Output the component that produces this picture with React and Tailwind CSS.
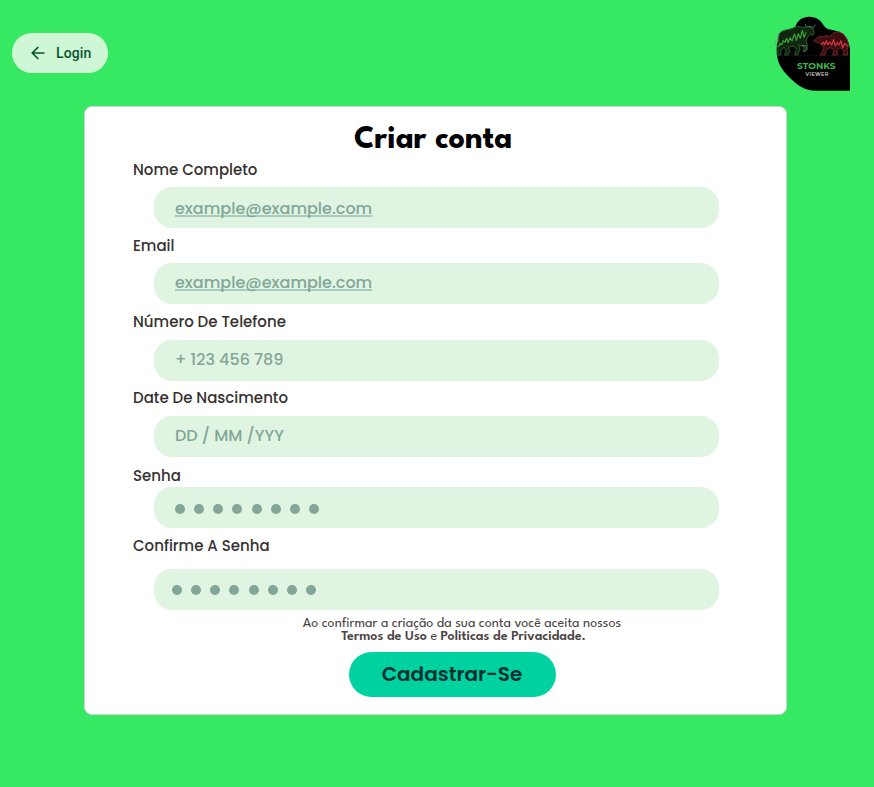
function Logo() {
  return (
    <svg className="h-[95px] w-[100px]" viewBox="0 0 300 285" role="img" aria-label="Stonks Viewer">
      <path d="M258 254H154C124 254 102 240 78 216C52 190 36 166 38 128C38 94 58 74 94 62C100 42 116 32 136 32C158 32 172 44 181 61C190 74 206 69 224 78C246 90 258 108 258 134Z" fill="#000" />
      <path d="M42 149H253" stroke="#0c1a10" strokeWidth="2" />
      <g fill="none" strokeLinejoin="round" strokeLinecap="round">
        <path d="M40 120C29 112 32 104 39 106C47 108 34 94 46 83" stroke="#6d9a70" strokeWidth="2.5" />
        <path d="M46 83C56 70 70 72 84 68L103 61L120 65L130 62L146 67L151 79L147 88L137 85L130 94L126 106L131 120L124 135L117 137L121 124L111 119L103 116L108 130L101 147H92L97 130L88 120L73 124L78 136L71 147H62L67 134L60 123L51 134L50 147H39L42 130L46 116L43 101Z" fill="#10260f" stroke="#2f6b33" strokeWidth="2.5" />
        <path d="M128 63L124 55M134 61L148 64L153 57M113 119L125 119L130 130L121 137" stroke="#5d8f5f" strokeWidth="2.5" />
        <path d="M42 121L49 113L53 116L58 104L63 109L68 97L72 110L78 95L84 105L91 84L97 103L103 83L109 97L115 73L120 94L126 80" stroke="#3da33d" strokeWidth="3.5" />
        <path d="M150 104L160 95L169 90L177 94L185 88L196 92L210 80L225 77L239 85L249 99L254 117L249 132L252 147H238L240 135L228 125L219 134L220 147H206L211 130L197 125L187 132L183 147H168L174 138L180 126L173 113L161 110Z" fill="#3b0e11" stroke="#842a2d" strokeWidth="2.5" />
        <path d="M172 116L178 108L182 116L187 104L192 116L198 108L203 117L209 101L214 120L220 109L225 117L231 104L236 126L242 112L250 120" stroke="#d83a3c" strokeWidth="3.5" />
      </g>
      <text x="157" y="190" textAnchor="middle" textLength="116" lengthAdjust="spacingAndGlyphs" fill="#3fb54a" className="font-[Montserrat,Lato,sans-serif] text-[25px] font-bold">STONKS</text>
      <text x="159" y="211" textAnchor="middle" textLength="69" fill="#cccccc" className="font-[Montserrat,Lato,sans-serif] text-[15px] font-semibold">VIEWER</text>
    </svg>
  );
}

function Field({ label, className, gap = "mt-[7px]", inset = "pl-[21px]", children }) {
  return (
    <div className={className}>
      <div className="h-5 whitespace-nowrap pl-[48px] text-[15px] font-medium leading-5 text-[#363130]">{label}</div>
      <div className={`ml-[69px] flex h-[41px] w-[565px] items-center rounded-[18px] bg-[#dff5e1] text-[16px] font-medium text-[#82a698] ${gap} ${inset}`}>
        {children}
      </div>
    </div>
  );
}

function Dots({ className }) {
  return (
    <div className={`flex gap-[9.15px] ${className}`}>
      {Array.from({ length: 8 }, (_, i) => <span key={i} className="size-[10px] rounded-full bg-[#82a698]" />)}
    </div>
  );
}

const underline = "underline decoration-[#a9cbbb] decoration-[1.5px] underline-offset-[1px] [text-decoration-skip-ink:none]";

export default function App() {
  return (
    <div className="h-[787px] w-[874px] overflow-hidden bg-[#37e862] font-[Poppins,Inter,sans-serif]">
      <header className="flex h-[106px] items-start justify-between pl-3 pr-[10px] pt-[6px]">
        <button className="mt-[27px] flex h-10 w-24 items-center rounded-full bg-[#cff7d5] pl-[19px] font-[Roboto,sans-serif] text-[14px] font-medium text-[#07552f]">
          <svg className="mr-[11px] size-[14px]" viewBox="0 0 14 14" fill="none" stroke="currentColor" strokeWidth="1.7">
            <path d="M13.5 7H1.5M7.3 1L1.3 7L7.3 13" />
          </svg>
          <span className="tracking-[0.1px]">Login</span>
        </button>
        <Logo />
      </header>
      <main className="ml-[84px] h-[609px] w-[703px] rounded-[8px] border border-[#cfd3cf] bg-white">
        <h1 className="ml-[269px] mt-[14px] h-[38px] whitespace-nowrap font-['League_Spartan',Lato,sans-serif] text-[32px] font-bold leading-10 text-black">Criar conta</h1>
        <Field label="Nome Completo" className="mt-px"><span className={`${underline} pt-0.5`}>example@example.com</span></Field>
        <Field label="Email" className="mt-2"><span className={`${underline} pb-0.5`}>example@example.com</span></Field>
        <Field label="Número De Telefone" className="mt-2" gap="mt-2"><span className="pb-0.5">+ 123 456 789</span></Field>
        <Field label="Date De Nascimento" className="mt-[7px]" gap="mt-2"><span className="pb-0.5">DD / MM /YYY</span></Field>
        <Field label="Senha" className="mt-[9px]" gap="mt-px"><Dots className="pt-0.5" /></Field>
        <Field label="Confirme A Senha" className="mt-2" gap="mt-[13px]" inset="pl-[18px]"><Dots className="pt-0" /></Field>
        <div className="ml-[199px] mt-[7px] w-[356px] whitespace-nowrap text-center font-['League_Spartan',Lato,sans-serif] text-[14px] leading-[13px] text-[#4b4544]">
          <p>Ao confirmar a criação da sua conta você aceita nossos</p>
          <p className="pl-[3px]"><strong className="font-semibold">Termos de Uso</strong> e <strong className="font-semibold">Politicas de Privacidade.</strong></p>
        </div>
        <button className="ml-[264px] mt-[9px] flex h-[45px] w-[207px] items-center justify-center rounded-full bg-[#00d1a0] pb-0.5 pr-px text-[20px] font-semibold text-[#093030]">Cadastrar-Se</button>
      </main>
    </div>
  );
}
